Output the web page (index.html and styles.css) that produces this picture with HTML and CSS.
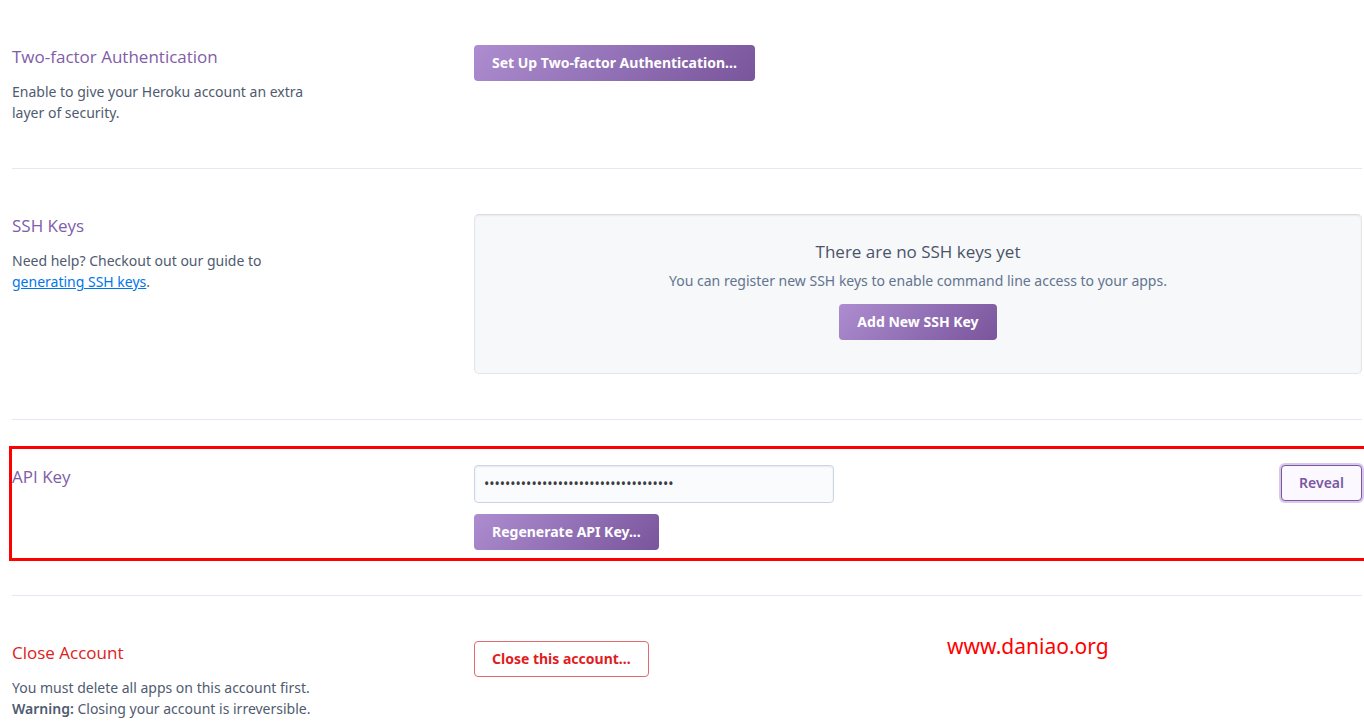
FILE: index.html
```html
<!DOCTYPE html>
<html lang="en">
<head>
<meta charset="utf-8">
<title>Account settings</title>
<link rel="stylesheet" href="styles.css">
</head>
<body>
<main class="settings">
  <section class="section">
    <div class="info">
      <h2 class="title">Two-factor Authentication</h2>
      <p class="text">Enable to give your Heroku account an extra layer of security.</p>
    </div>
    <div class="content">
      <button type="button" class="btn btn-primary">Set Up Two-factor Authentication...</button>
    </div>
  </section>

  <section class="section">
    <div class="info">
      <h2 class="title">SSH Keys</h2>
      <p class="text">Need help? Checkout out our guide to <a class="link" href="#ssh-guide">generating SSH keys</a>.</p>
    </div>
    <div class="content">
      <div class="well">
        <h3 class="well-title">There are no SSH keys yet</h3>
        <p class="well-text">You can register new SSH keys to enable command line access to your apps.</p>
        <button type="button" class="btn btn-primary">Add New SSH Key</button>
      </div>
    </div>
  </section>

  <section class="section highlighted">
    <div class="info">
      <h2 class="title"><label for="api-key">API Key</label></h2>
    </div>
    <div class="content">
      <div class="key-row">
        <input class="key-input" id="api-key" type="password" value="000000000000000000000000000000000000" readonly>
        <button type="button" class="btn btn-outline">Reveal</button>
      </div>
      <button type="button" class="btn btn-primary">Regenerate API Key...</button>
    </div>
  </section>

  <section class="section section-close">
    <div class="info">
      <h2 class="title title-danger">Close Account</h2>
      <p class="text">You must delete all apps on this account first. <strong>Warning:</strong> Closing your account is irreversible.</p>
    </div>
    <div class="content">
      <button type="button" class="btn btn-danger">Close this account...</button>
    </div>
    <span class="watermark">www.daniao.org</span>
  </section>
</main>
</body>
</html>
```
FILE: styles.css
```css
* { box-sizing: border-box; }

body {
  margin: 0;
  background: #fff;
  color: #596981;
  font-family: "Noto Sans", "Open Sans", sans-serif;
  font-size: 14px;
  line-height: 21px;
  overflow-x: hidden;
}

.settings { padding: 0 2px 0 12px; }

.section {
  position: relative;
  display: grid;
  grid-template-columns: 1fr 2fr;
  column-gap: 18px;
  padding: 45px 0;
  border-bottom: 1px solid #e7e7f3;
}

.section-close {
  padding-bottom: 0;
  border-bottom: 0;
}

.title {
  margin: 0;
  color: #7f5da8;
  font-family: "Open Sans", "Noto Sans", sans-serif;
  font-size: 17px;
  font-weight: 400;
  line-height: 24px;
}

.title-danger { color: #e02020; }

.text {
  max-width: 320px;
  margin: 12px 0 0;
  color: #4f5b70;
}

.text strong { font-weight: 600; }

.link { color: #0176e8; }

.well {
  display: flex;
  flex-direction: column;
  align-items: center;
  min-height: 160px;
  padding: 25px 20px 33px;
  border: 1px solid #e3e5ec;
  border-top-color: #dadce3;
  border-radius: 5px;
  background: #f7f8fa;
  box-shadow: inset 0 1px 2px rgba(0, 0, 0, 0.06);
  text-align: center;
}

.well-title {
  margin: 0;
  color: #4a5468;
  font-family: "Open Sans", "Noto Sans", sans-serif;
  font-size: 17px;
  font-weight: 400;
  line-height: 24px;
}

.well-text {
  margin: 6px 0 13px;
  color: #62748e;
}

.btn {
  height: 36px;
  padding: 0 17px 2px;
  border: 1px solid transparent;
  border-radius: 4px;
  font: inherit;
  font-weight: 700;
  line-height: 21px;
  white-space: nowrap;
}

.btn-primary {
  border: 0;
  padding: 0 18px 2px;
  background: linear-gradient(135deg, #ad8dd0, #79559c);
  color: #fff;
}

.btn-outline {
  border-color: #79589f;
  background: #fbf8ff;
  box-shadow: 0 0 0 2px #d9c7ec;
  color: #79589f;
  font-weight: 600;
}

.btn-danger {
  border-color: #e06a6d;
  background: #fff;
  color: #e01e1e;
}

.key-row {
  display: flex;
  align-items: flex-start;
  justify-content: space-between;
  margin-bottom: 11px;
}

.key-input {
  width: 360px;
  height: 38px;
  padding: 0 9px 2px;
  border: 1px solid #cbd4e6;
  border-radius: 4px;
  background: #fafbfd;
  box-shadow: inset 0 1px 2px rgba(0, 0, 0, 0.08);
  color: #3c3c44;
  font: inherit;
}

.highlighted::after {
  content: "";
  position: absolute;
  inset: 26px -2px 34px -3px;
  border: 3px solid #fe0000;
  border-right: 0;
  pointer-events: none;
}

.watermark {
  position: absolute;
  top: 35px;
  left: 935px;
  color: #fe0000;
  font-size: 21px;
  line-height: 30px;
}
```
